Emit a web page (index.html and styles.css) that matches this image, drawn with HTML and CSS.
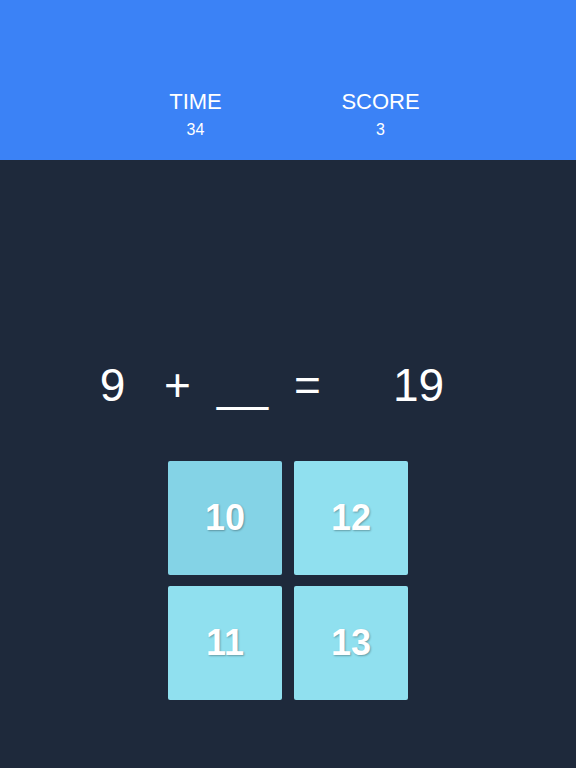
FILE: index.html
```html
<!DOCTYPE html>
<html lang="en">
<head>
    <meta charset="UTF-8">
    <meta name="viewport" content="width=device-width, initial-scale=1.0">
    <title>Math Game</title>
    <link rel="stylesheet" href="styles.css">
</head>
<body>
    <header class="topbar">
        <div class="stat">
            <div class="stat-label">TIME</div>
            <div class="stat-value">34</div>
        </div>
        <div class="stat">
            <div class="stat-label">SCORE</div>
            <div class="stat-value">3</div>
        </div>
    </header>
    <main class="game">
        <div class="equation">
            <span class="term">9</span>
            <span class="term">+</span>
            <span class="term">__</span>
            <span class="term">=</span>
            <span class="term result">19</span>
        </div>
        <div class="choices">
            <button class="choice active">10</button>
            <button class="choice">12</button>
            <button class="choice">11</button>
            <button class="choice">13</button>
        </div>
    </main>
</body>
</html>
```

FILE: styles.css
```css
body {
    font-family: "Liberation Sans", Arial, sans-serif;
    margin: 0;
    padding: 0;
    background: #1e293b;
    color: #fff;
}
.topbar {
    height: 160px;
    box-sizing: border-box;
    padding-top: 89px;
    background: #3b82f6;
    display: flex;
    justify-content: center;
    gap: 65px;
}
.topbar .stat {
    width: 120px;
    text-align: center;
}
.topbar .stat-label {
    font-size: 22px;
    line-height: 25px;
}
.topbar .stat-value {
    font-size: 16px;
    line-height: 18px;
    margin-top: 7px;
}
.game {
    padding-top: 200px;
}
.equation {
    display: flex;
    padding-left: 80px;
    font-size: 46px;
    line-height: 50px;
}
.equation .term {
    width: 65px;
    text-align: center;
}
.equation .result {
    margin-left: 46px;
}
.choices {
    display: grid;
    grid-template-columns: 114px 114px;
    grid-auto-rows: 114px;
    gap: 11px 12px;
    justify-content: center;
    margin-top: 51px;
}
.choice {
    border: none;
    border-radius: 2px;
    background: #90e0ef;
    color: #fff;
    font-family: "Liberation Sans", Arial, sans-serif;
    font-size: 36px;
    font-weight: bold;
    text-shadow: 1px 1px 2px rgba(0, 0, 0, 0.3);
    cursor: pointer;
}
.choice.active {
    background: #84d3e6;
}
```
